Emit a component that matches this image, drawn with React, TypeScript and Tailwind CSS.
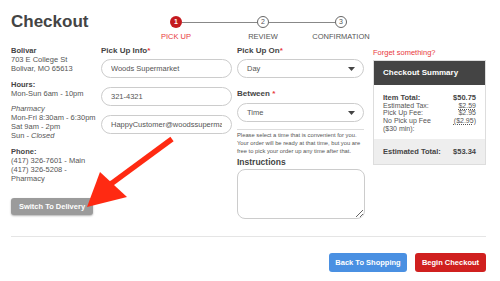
import React from "react";

const Req = () => <span className="text-[#e8383d]">*</span>;

function Step({ n, label, active }: { n: number; label: string; active?: boolean }) {
	return (
		<div className="flex w-[60px] flex-col items-center">
			<div
				className={
					active
						? "z-10 flex h-[12px] w-[12px] items-center justify-center rounded-full bg-[#c41a1f] text-[7px] font-bold text-white"
						: "z-10 flex h-[12px] w-[12px] items-center justify-center rounded-full border border-[#666] bg-white text-[7px] text-[#555]"
				}
			>
				{n}
			</div>
			<div className={active ? "mt-[4px] text-[7.5px] leading-[9px] text-[#e8383d]" : "mt-[4px] text-[7.5px] leading-[9px] text-[#555]"}>
				{label}
			</div>
		</div>
	);
}

function Caret() {
	return (
		<svg width="7" height="4" viewBox="0 0 7 4" className="absolute right-[8px] top-[7.5px]">
			<path d="M0 0 L7 0 L3.5 4 Z" fill="#444" />
		</svg>
	);
}

export default function App() {
	return (
		<div className="relative h-[281px] w-[500px] overflow-hidden bg-white text-[#555]" style={{ fontFamily: '"Liberation Sans", Arial, sans-serif' }}>
			<header className="flex h-[44px] items-start pl-[11px] pt-[12px]">
				<h1 className="w-[135px] text-[17px] font-bold leading-[20px] text-[#444]">Checkout</h1>
				<div className="mt-[4px] flex items-start">
					<Step n={1} label="PICK UP" active />
					<div className="-mx-[24px] mt-[5.5px] h-[1.5px] w-[75px] bg-[#888]" />
					<Step n={2} label="REVIEW" />
					<div className="-mx-[24px] mt-[5.5px] h-[1.5px] w-[66px] bg-[#888]" />
					<Step n={3} label="CONFIRMATION" />
				</div>
			</header>

			<main className="flex h-[190px] pl-[11px] pt-[2px] text-[7.5px] leading-[9px]">
				<section className="w-[90px]">
					<div className="font-bold text-[#444]">Bolivar</div>
					<div>703 E College St</div>
					<div>Bolivar, MO 65613</div>
					<div className="mt-[7px] font-bold text-[#444]">Hours:</div>
					<div>Mon-Sun 6am - 10pm</div>
					<div className="mt-[6px] italic">Pharmacy</div>
					<div className="whitespace-nowrap">Mon-Fri 8:30am - 6:30pm</div>
					<div>Sat 9am - 2pm</div>
					<div>
						Sun - <span className="italic">Closed</span>
					</div>
					<div className="mt-[7px] font-bold text-[#444]">Phone:</div>
					<div>(417) 326-7601 - Main</div>
					<div>(417) 326-5208 -</div>
					<div>Pharmacy</div>
					<button className="mt-[15px] h-[17px] w-[82px] rounded-[3px] bg-[#9b9b9b] text-[7.5px] font-bold text-white shadow-[0_1px_2px_rgba(0,0,0,0.3)]">
						Switch To Delivery
					</button>
				</section>

				<section className="w-[131px]">
					<div className="text-[8px] font-bold text-[#444]">
						Pick Up Info<Req />
					</div>
					<div className="mt-[3.5px] flex flex-col gap-[9px]">
						{["Woods Supermarket", "321-4321", "HappyCustomer@woodssupermarket.com"].map((v) => (
							<input
								key={v}
								readOnly
								value={v}
								className="h-[19px] w-full rounded-full border border-[#ccc] px-[9px] text-[7.5px] text-[#555] outline-none"
							/>
						))}
					</div>
				</section>

				<section className="ml-[5px] w-[127px]">
					<div className="text-[8px] font-bold text-[#444]">
						Pick Up On<Req />
					</div>
					<div className="relative mt-[3.5px] flex h-[19px] items-center rounded-full border border-[#ccc] px-[9px]">
						Day
						<Caret />
					</div>
					<div className="mt-[11.5px] text-[8px] font-bold text-[#444]">
						Between <Req />
					</div>
					<div className="relative mt-[4.5px] flex h-[19px] items-center rounded-full border border-[#ccc] px-[9px]">
						Time
						<Caret />
					</div>
					<div className="mt-[7px] h-px bg-[#ddd]" />
					<p className="mt-[1px] text-[5.8px] leading-[8.3px] text-[#555]">
						Please select a time that is convenient for you. Your order will be ready at that time, but you are free to pick your order up any time after that.
					</p>
					<div className="mt-[2px] text-[8.5px] font-bold leading-[10px] text-[#444]">Instructions</div>
					<textarea className="mt-[2px] block h-[50px] w-[128px] rounded-[8px] border border-[#ccc] outline-none" />
				</section>

				<section className="ml-[9px] w-[113px]">
					<div className="mt-[1.5px] text-[#e8383d]">Forget something?</div>
					<div className="mt-[3px] border border-[#ddd]">
						<div className="flex h-[24px] items-center bg-[#444] pl-[9px] text-[8px] font-bold text-white">Checkout Summary</div>
						<div className="px-[9px] pb-[6px] pt-[8px] text-[7px] leading-[7.8px]">
							<div className="flex justify-between text-[7.5px] font-bold leading-[9px] text-[#444]">
								<span>Item Total:</span>
								<span>$50.75</span>
							</div>
							<div className="flex justify-between">
								<span>Estimated Tax:</span>
								<span className="underline decoration-dotted">$2.59</span>
							</div>
							<div className="flex justify-between">
								<span>Pick Up Fee:</span>
								<span>$2.95</span>
							</div>
							<div className="flex justify-between">
								<span>
									No Pick up Fee
									<br />
									($30 min):
								</span>
								<span className="underline decoration-dotted">($2.95)</span>
							</div>
						</div>
						<div className="flex h-[25px] items-center justify-between bg-[#eee] px-[9px] text-[7.5px] font-bold text-[#444]">
							<span>Estimated Total:</span>
							<span>$53.34</span>
						</div>
					</div>
				</section>
			</main>

			<div className="ml-[11px] mt-[2px] h-px w-[475px] bg-[#e5e5e5]" />
			<div className="flex justify-end gap-[8px] pr-[14px] pt-[16px]">
				<button className="h-[19px] w-[78px] rounded-[3px] bg-[#4a90e2] text-[7.5px] font-bold text-white">Back To Shopping</button>
				<button className="h-[19px] w-[71px] rounded-[3px] bg-[#d0201f] text-[7.5px] font-bold text-white">Begin Checkout</button>
			</div>

			<svg className="pointer-events-none absolute left-0 top-0" width="500" height="281">
				<line x1="172" y1="139" x2="108" y2="186" stroke="#ff2a12" strokeWidth="5.5" />
				<polygon points="87,207 100,172 127,197" fill="#ff2a12" />
			</svg>
		</div>
	);
}
